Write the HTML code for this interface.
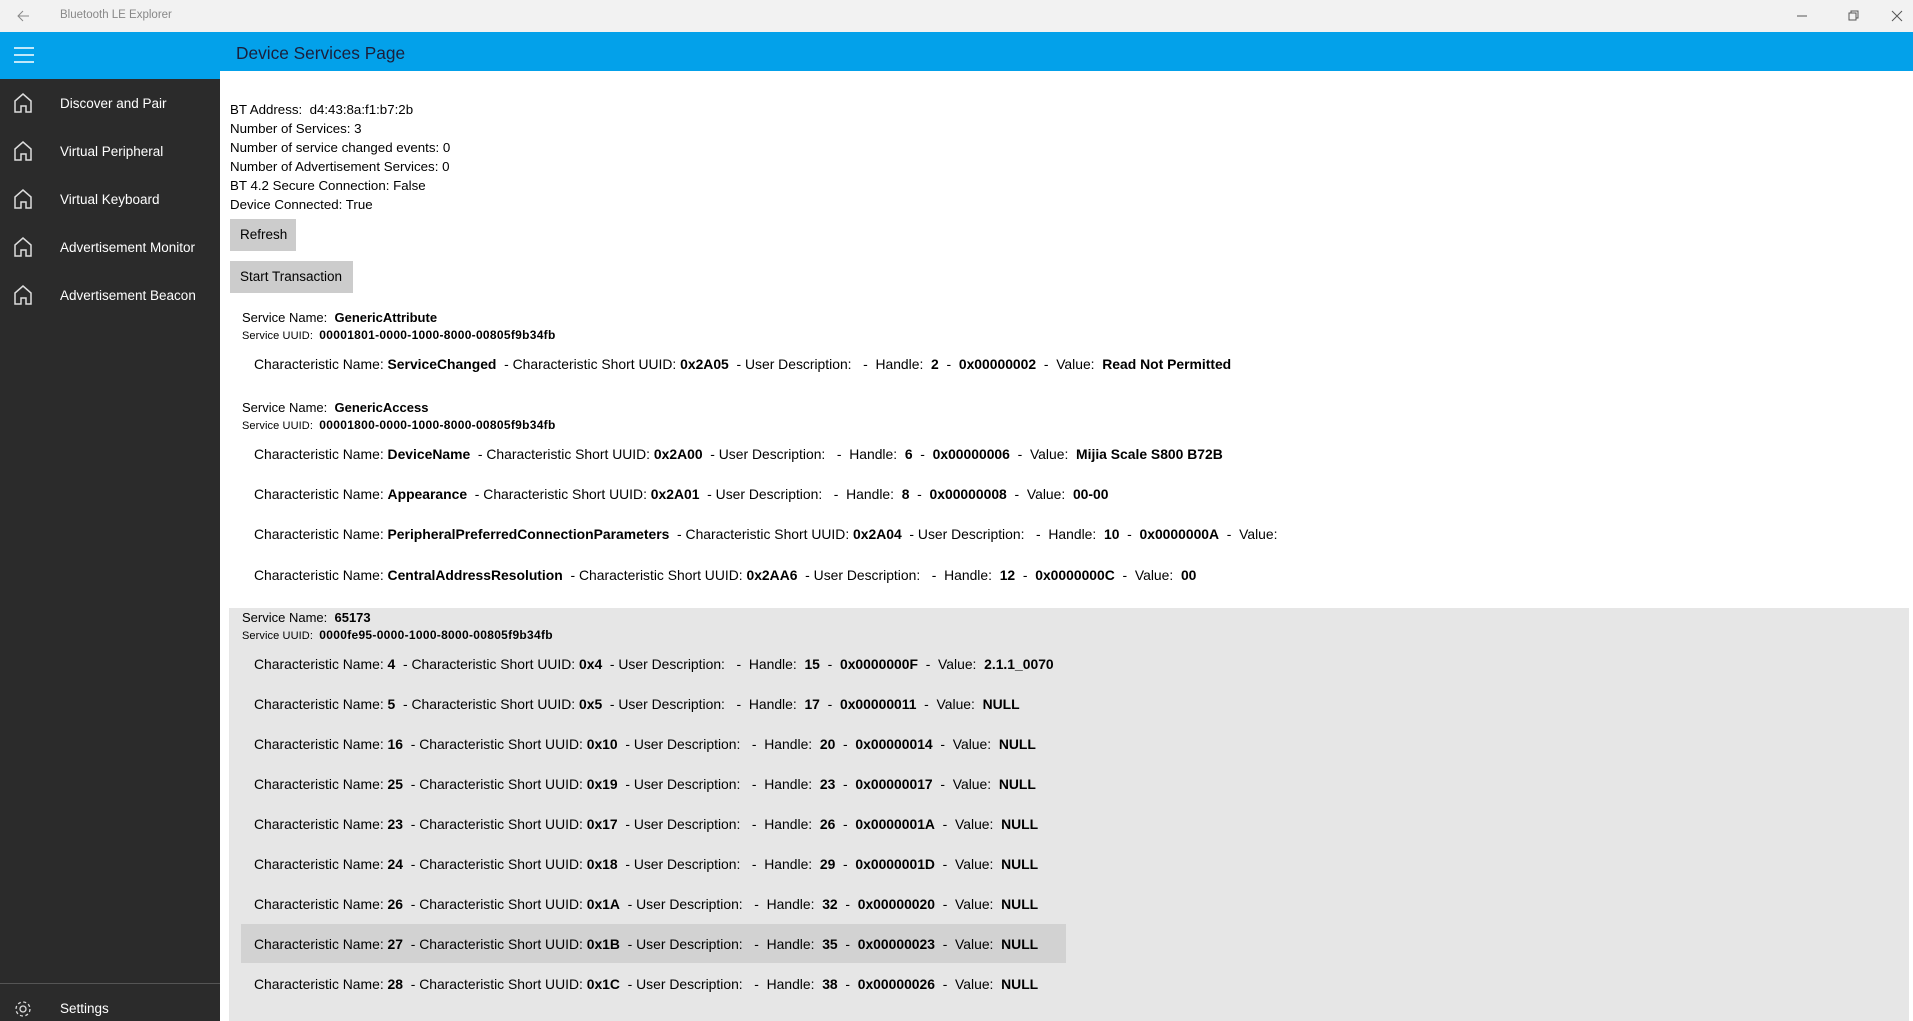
<!DOCTYPE html>
<html><head><meta charset="utf-8"><style>
*{margin:0;padding:0;box-sizing:border-box}
body{width:1913px;height:1021px;overflow:hidden;background:#fff;font-family:"Liberation Sans",sans-serif;font-size:13.5px;color:#000;position:relative}
.abs{position:absolute;white-space:nowrap}
#tb{left:0;top:0;width:1913px;height:32px;background:#f2f2f2}
#hdr{left:0;top:32px;width:1913px;height:39px;background:#03a1ea}
#side{left:0;top:71px;width:220px;height:950px;background:#2b2b2b}
#sideblue{left:0;top:71px;width:220px;height:8px;background:#03a1ea}
.nav{color:#fff;font-size:13.5px;left:60px}
.l{left:230px;font-size:13.3px}
.btn{background:#cccccc;font-size:13.5px;padding-left:10px;line-height:32px;height:32px}
.sn{left:242px;font-size:13px}
.su{left:242px;font-size:11px;letter-spacing:0.1px}
.su b{font-size:12px;letter-spacing:0.3px}
.ch{left:254px;font-size:13.9px}
b{font-weight:bold}
#gray{left:229px;top:608px;width:1680px;height:413px;background:#e6e6e6}
#hl{left:241px;top:924px;width:825px;height:39px;background:#d2d2d2}
</style></head><body>
<div class="abs" id="tb"></div>
<svg class="abs" style="left:16px;top:9px" width="14" height="14" viewBox="0 0 14 14"><path d="M13 7H2M7 2L2 7l5 5" stroke="#888" fill="none" stroke-width="1"/></svg>
<div class="abs" style="left:60px;top:9px;font-size:11.5px;color:#888">Bluetooth LE Explorer</div>
<svg class="abs" style="left:1797px;top:10px" width="110" height="12"><path d="M0 6h10" stroke="#555"/><path d="M52 3h7v7h-7zM54 3V1h7v7h-2" stroke="#555" fill="none"/><path d="M95 1l10 10M105 1L95 11" stroke="#555"/></svg>
<div class="abs" id="hdr"></div>
<svg class="abs" style="left:14px;top:47px" width="21" height="16"><path d="M0 1h20M0 8h20M0 15h20" stroke="#fff" stroke-width="1.5"/></svg>
<div class="abs" style="left:236px;top:43px;font-size:17.3px;color:#1b1f3b">Device Services Page</div>
<div class="abs" id="side"></div>
<div class="abs" id="sideblue"></div>
<svg class="abs" style="left:13px;top:92px" width="22" height="250" viewBox="0 0 22 250">
<g stroke="#ddd" stroke-width="1.5" fill="none">
<path d="M2 20V9L10 2l8 7v11h-5v-6h-5v6z"/>
<path transform="translate(0,48)" d="M2 20V9L10 2l8 7v11h-5v-6h-5v6z"/>
<path transform="translate(0,96)" d="M2 20V9L10 2l8 7v11h-5v-6h-5v6z"/>
<path transform="translate(0,144)" d="M2 20V9L10 2l8 7v11h-5v-6h-5v6z"/>
<path transform="translate(0,192)" d="M2 20V9L10 2l8 7v11h-5v-6h-5v6z"/>
</g></svg>
<div class="abs nav" style="top:96px">Discover and Pair</div>
<div class="abs nav" style="top:144px">Virtual Peripheral</div>
<div class="abs nav" style="top:192px">Virtual Keyboard</div>
<div class="abs nav" style="top:240px">Advertisement Monitor</div>
<div class="abs nav" style="top:288px">Advertisement Beacon</div>
<div class="abs" style="left:0;top:983px;width:220px;height:1px;background:#555"></div>
<svg class="abs" style="left:13px;top:999px" width="20" height="20" viewBox="0 0 20 20"><circle cx="10" cy="10" r="3" stroke="#ddd" fill="none" stroke-width="1.3"/><circle cx="10" cy="10" r="7" stroke="#ddd" fill="none" stroke-width="1.3" stroke-dasharray="3 2.5"/></svg>
<div class="abs nav" style="top:1001px">Settings</div>

<div class="abs l" style="top:102px">BT Address:&nbsp; d4:43:8a:f1:b7:2b</div>
<div class="abs l" style="top:121px">Number of Services: 3</div>
<div class="abs l" style="top:140px">Number of service changed events: 0</div>
<div class="abs l" style="top:159px">Number of Advertisement Services: 0</div>
<div class="abs l" style="top:178px">BT 4.2 Secure Connection: False</div>
<div class="abs l" style="top:197px">Device Connected: True</div>
<div class="abs btn" style="left:230px;top:219px;width:66px">Refresh</div>
<div class="abs btn" style="left:230px;top:261px;width:123px">Start Transaction</div>

<div class="abs sn" style="top:310px">Service Name:&nbsp; <b>GenericAttribute</b></div>
<div class="abs su" style="top:328px">Service UUID:&nbsp; <b>00001801-0000-1000-8000-00805f9b34fb</b></div>
<div class="abs ch" style="top:356px">Characteristic Name: <b>ServiceChanged</b>&nbsp; - Characteristic Short UUID: <b>0x2A05</b>&nbsp; - User Description: &nbsp; - &nbsp;Handle:&nbsp; <b>2</b>&nbsp; - &nbsp;<b>0x00000002</b>&nbsp; - &nbsp;Value:&nbsp; <b>Read Not Permitted</b></div>

<div class="abs sn" style="top:400px">Service Name:&nbsp; <b>GenericAccess</b></div>
<div class="abs su" style="top:418px">Service UUID:&nbsp; <b>00001800-0000-1000-8000-00805f9b34fb</b></div>
<div class="abs ch" style="top:446px">Characteristic Name: <b>DeviceName</b>&nbsp; - Characteristic Short UUID: <b>0x2A00</b>&nbsp; - User Description: &nbsp; - &nbsp;Handle:&nbsp; <b>6</b>&nbsp; - &nbsp;<b>0x00000006</b>&nbsp; - &nbsp;Value:&nbsp; <b>Mijia Scale S800 B72B</b></div>
<div class="abs ch" style="top:486px">Characteristic Name: <b>Appearance</b>&nbsp; - Characteristic Short UUID: <b>0x2A01</b>&nbsp; - User Description: &nbsp; - &nbsp;Handle:&nbsp; <b>8</b>&nbsp; - &nbsp;<b>0x00000008</b>&nbsp; - &nbsp;Value:&nbsp; <b>00-00</b></div>
<div class="abs ch" style="top:526px">Characteristic Name: <b>PeripheralPreferredConnectionParameters</b>&nbsp; - Characteristic Short UUID: <b>0x2A04</b>&nbsp; - User Description: &nbsp; - &nbsp;Handle:&nbsp; <b>10</b>&nbsp; - &nbsp;<b>0x0000000A</b>&nbsp; - &nbsp;Value:</div>
<div class="abs ch" style="top:567px">Characteristic Name: <b>CentralAddressResolution</b>&nbsp; - Characteristic Short UUID: <b>0x2AA6</b>&nbsp; - User Description: &nbsp; - &nbsp;Handle:&nbsp; <b>12</b>&nbsp; - &nbsp;<b>0x0000000C</b>&nbsp; - &nbsp;Value:&nbsp; <b>00</b></div>

<div class="abs" id="gray"></div>
<div class="abs" id="hl"></div>
<div class="abs sn" style="top:610px">Service Name:&nbsp; <b>65173</b></div>
<div class="abs su" style="top:628px">Service UUID:&nbsp; <b>0000fe95-0000-1000-8000-00805f9b34fb</b></div>
<div class="abs ch" style="top:656px">Characteristic Name: <b>4</b>&nbsp; - Characteristic Short UUID: <b>0x4</b>&nbsp; - User Description: &nbsp; - &nbsp;Handle:&nbsp; <b>15</b>&nbsp; - &nbsp;<b>0x0000000F</b>&nbsp; - &nbsp;Value:&nbsp; <b>2.1.1_0070</b></div>
<div class="abs ch" style="top:696px">Characteristic Name: <b>5</b>&nbsp; - Characteristic Short UUID: <b>0x5</b>&nbsp; - User Description: &nbsp; - &nbsp;Handle:&nbsp; <b>17</b>&nbsp; - &nbsp;<b>0x00000011</b>&nbsp; - &nbsp;Value:&nbsp; <b>NULL</b></div>
<div class="abs ch" style="top:736px">Characteristic Name: <b>16</b>&nbsp; - Characteristic Short UUID: <b>0x10</b>&nbsp; - User Description: &nbsp; - &nbsp;Handle:&nbsp; <b>20</b>&nbsp; - &nbsp;<b>0x00000014</b>&nbsp; - &nbsp;Value:&nbsp; <b>NULL</b></div>
<div class="abs ch" style="top:776px">Characteristic Name: <b>25</b>&nbsp; - Characteristic Short UUID: <b>0x19</b>&nbsp; - User Description: &nbsp; - &nbsp;Handle:&nbsp; <b>23</b>&nbsp; - &nbsp;<b>0x00000017</b>&nbsp; - &nbsp;Value:&nbsp; <b>NULL</b></div>
<div class="abs ch" style="top:816px">Characteristic Name: <b>23</b>&nbsp; - Characteristic Short UUID: <b>0x17</b>&nbsp; - User Description: &nbsp; - &nbsp;Handle:&nbsp; <b>26</b>&nbsp; - &nbsp;<b>0x0000001A</b>&nbsp; - &nbsp;Value:&nbsp; <b>NULL</b></div>
<div class="abs ch" style="top:856px">Characteristic Name: <b>24</b>&nbsp; - Characteristic Short UUID: <b>0x18</b>&nbsp; - User Description: &nbsp; - &nbsp;Handle:&nbsp; <b>29</b>&nbsp; - &nbsp;<b>0x0000001D</b>&nbsp; - &nbsp;Value:&nbsp; <b>NULL</b></div>
<div class="abs ch" style="top:896px">Characteristic Name: <b>26</b>&nbsp; - Characteristic Short UUID: <b>0x1A</b>&nbsp; - User Description: &nbsp; - &nbsp;Handle:&nbsp; <b>32</b>&nbsp; - &nbsp;<b>0x00000020</b>&nbsp; - &nbsp;Value:&nbsp; <b>NULL</b></div>
<div class="abs ch" style="top:936px">Characteristic Name: <b>27</b>&nbsp; - Characteristic Short UUID: <b>0x1B</b>&nbsp; - User Description: &nbsp; - &nbsp;Handle:&nbsp; <b>35</b>&nbsp; - &nbsp;<b>0x00000023</b>&nbsp; - &nbsp;Value:&nbsp; <b>NULL</b></div>
<div class="abs ch" style="top:976px">Characteristic Name: <b>28</b>&nbsp; - Characteristic Short UUID: <b>0x1C</b>&nbsp; - User Description: &nbsp; - &nbsp;Handle:&nbsp; <b>38</b>&nbsp; - &nbsp;<b>0x00000026</b>&nbsp; - &nbsp;Value:&nbsp; <b>NULL</b></div>
</body></html>
